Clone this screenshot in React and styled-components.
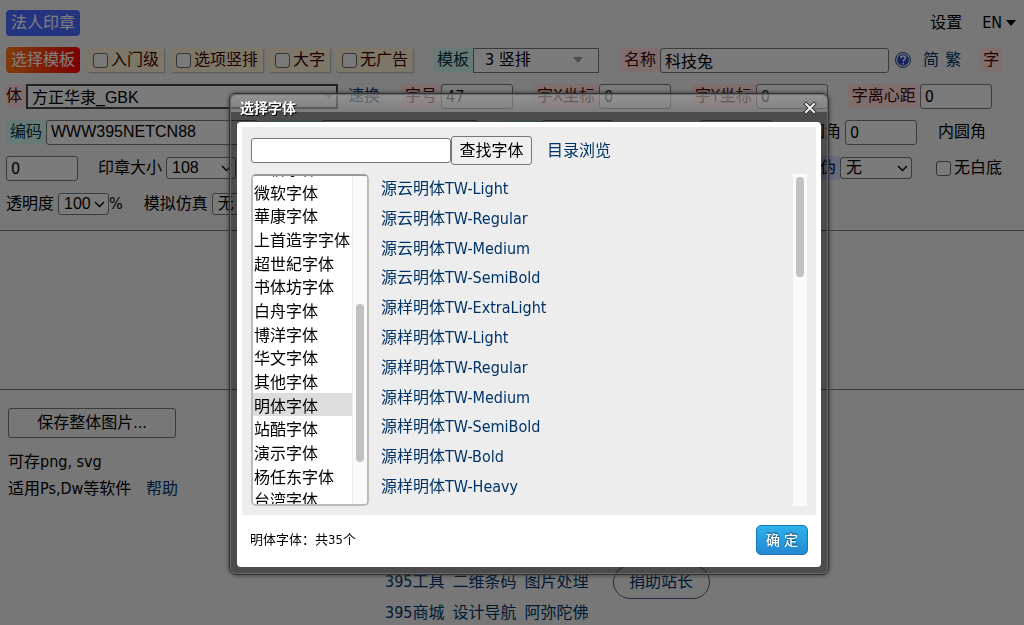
import React, { useLayoutEffect, useRef } from 'react';
import styled, { createGlobalStyle, css } from 'styled-components';

const uiFont = "'DejaVu Sans Condensed', 'Noto Sans CJK SC', sans-serif";
const inputFont = "'Liberation Sans', 'Noto Sans CJK SC', sans-serif";

const GlobalStyle = createGlobalStyle`
  body {
    margin: 0;
    background: #eee;
    color: #000;
    font: 16px/24px ${uiFont};
    overflow: hidden;
  }

  * {
    box-sizing: border-box;
  }

  a {
    color: #036;
    text-decoration: none;
  }
`;

const Page = styled.div`
  min-height: 100vh;
  padding-top: 10px;
`;

const TopBar = styled.header`
  display: flex;
  align-items: center;
  gap: 20px;
  padding: 0 8px 0 6px;
`;

const Tag = styled.button`
  height: 26px;
  padding: 0 5px;
  border: 0;
  border-radius: 4px;
  color: #fff;
  font: 16px/24px ${uiFont};
  white-space: nowrap;
  background: ${({ $hot }) => ($hot ? 'linear-gradient(90deg, #ff7a1a, #f00)' : '#4a68ff')};
`;

const MenuButton = styled.button`
  display: flex;
  align-items: center;
  gap: 4px;
  padding: 0;
  border: 0;
  background: none;
  font: 16px/24px ${uiFont};
`;

const Settings = styled(MenuButton)`
  margin-left: auto;
`;

const Caret = styled.svg`
  width: 10px;
  height: 6px;
`;

const Controls = styled.section`
  display: flex;
  flex-direction: column;
  gap: 10px;
  margin: 11px 22px 0 6px;
  padding-bottom: 13px;
  overflow: hidden;
`;

const Row = styled.div`
  display: flex;
  align-items: center;
  height: 26px;
  white-space: nowrap;

  > * {
    flex-shrink: 0;
  }
`;

const Field = styled.label`
  display: flex;
  align-items: center;
  margin-left: ${({ $gap = 0 }) => $gap}px;
`;

const tones = {
  pink: css`background: #fdd; color: #400;`,
  teal: css`background: #cff4f0; color: #033;`,
  blue: css`background: #ccd4ff; color: #003;`,
  plain: css`background: none;`,
};

const FieldName = styled.span`
  padding: 0 4px 0 ${({ $flush }) => ($flush ? 0 : 4)}px;
  border-radius: 4px 0 0 4px;
  ${({ $tone = 'plain' }) => tones[$tone]}
`;

const TextInput = styled.input`
  width: ${({ $width = 72 }) => $width}px;
  height: 25px;
  padding: 0 4px;
  border: 1px solid #767676;
  border-radius: 3px;
  background: #f6f6f6;
  font: 16px/20px ${({ $arial }) => ($arial ? inputFont : uiFont)};
`;

const FontInput = styled(TextInput)`
  border: 2px solid #444;
  border-radius: 0;
`;

const ComboBox = styled.span`
  display: flex;
  align-items: center;
  position: relative;

  > svg {
    position: absolute;
    right: ${({ $inset = 4 }) => $inset}px;
  }
`;

const Select = styled.select`
  appearance: none;
  width: ${({ $width }) => $width}px;
  height: 22px;
  padding: 0 5px;
  border: 1px solid #767676;
  border-radius: 3px;
  background: #f6f6f6;
  font: 16px/20px ${inputFont};
`;

const TemplateSelect = styled(Select)`
  height: 25px;
  padding: 0 11px;
  border-radius: 0;
  font-family: ${uiFont};
`;

const CheckLabel = styled.label`
  display: flex;
  align-items: center;
  gap: 3px;
  height: 24px;
  margin-right: 5px;
  padding: 0 5px 0 7px;
  border-radius: 4px 0 0 4px;
  background: #f8efd0;
  color: #400;
  box-shadow: 1px 1px 2px #aaa;
`;

const PlainCheck = styled(CheckLabel)`
  margin: 0 0 0 17px;
  background: none;
  color: #000;
  box-shadow: none;
`;

const CheckBox = styled.input`
  appearance: none;
  width: 15px;
  height: 15px;
  margin: 0;
  border: 1px solid #666;
  border-radius: 3px;
  background: #f4f4f4;
`;

const HelpIcon = styled.svg`
  width: 16px;
  height: 16px;
  margin: 0 12px 0 6px;
`;

const TextLink = styled.a`
  margin-left: ${({ $gap = 0 }) => $gap}px;
`;

const Preview = styled.section`
  height: 160px;
  border: solid #777;
  border-width: 1px 0;
`;

const SaveArea = styled.section`
  padding: 18px 8px 0;
`;

const SaveButton = styled.button`
  display: block;
  width: 168px;
  height: 30px;
  margin-bottom: 12px;
  border: 1px solid #767676;
  border-radius: 3px;
  background: #efefef;
  font: 16px/24px ${uiFont};
`;

const SaveNote = styled.p`
  margin: 0 0 3px;
`;

const Footer = styled.footer`
  display: grid;
  grid-template-columns: repeat(3, max-content) 1fr;
  column-gap: 8px;
  row-gap: 2px;
  align-items: center;
  margin-top: 64px;
  padding-left: 385px;
`;

const DonateButton = styled.button`
  width: 97px;
  height: 34px;
  margin-left: 16px;
  border: 1px solid #557;
  border-radius: 17px;
  background: none;
  color: #036;
  font: 16px/24px ${uiFont};
`;

const Overlay = styled.div`
  position: fixed;
  inset: 0;
  display: flex;
  align-items: flex-start;
  justify-content: center;
  padding: 93px 0 0 34px;
  background: rgba(0, 0, 0, 0.5);
`;

const Dialog = styled.div`
  width: 600px;
  padding: 0 7px 7px;
  border: 1px solid #333;
  border-radius: 7px;
  background:
    linear-gradient(rgba(255, 255, 255, 0.4), rgba(255, 255, 255, 0.28)) top / 100% 18px no-repeat,
    rgba(0, 0, 0, 0.36);
  box-shadow: inset 0 0 1px 1px #6a6a6a, 0 0 4px #333;
`;

const DialogHeader = styled.header`
  display: flex;
  align-items: center;
  justify-content: space-between;
  height: 28px;
  padding: 0 4px 0 3px;
`;

const DialogTitle = styled.h2`
  margin: 0;
  color: #fff;
  font: bold 14px/20px ${uiFont};
  text-shadow: 1px 1px 1px #000;
`;

const CloseButton = styled.button`
  display: flex;
  padding: 0;
  border: 0;
  background: none;
`;

const DialogPanel = styled.div`
  padding: 5px 5px 0;
  border-radius: 4px;
  background: #fff;
`;

const DialogBody = styled.div`
  height: 388px;
  padding: 9px 9px 0;
  background: #ededed;
`;

const SearchRow = styled.form`
  display: flex;
  align-items: center;
  height: 29px;
  margin-bottom: 9px;
`;

const SearchInput = styled(TextInput)`
  background: #fff;
`;

const SearchButton = styled.button`
  width: 81px;
  height: 29px;
  padding: 0;
  border: 1px solid #767676;
  border-radius: 3px;
  background: #efefef;
  font: 16px/24px ${uiFont};
`;

const Lists = styled.div`
  display: flex;
  height: 332px;
`;

const CategoryBox = styled.div`
  display: flex;
  width: 118px;
  margin-right: 12px;
  border: 2px solid #bbb;
  border-top-color: #999;
  border-radius: 5px;
  background: #fff;
  overflow: hidden;
`;

const CategoryList = styled.select`
  flex: 1;
  min-width: 0;
  height: 328px;
  padding: 0;
  border: 0;
  outline: 0;
  background: #fff;
  font: 16px/20px ${uiFont};
  overflow: hidden;

  option {
    height: 24px;
    min-height: 0;
    padding: 0 1px;
    line-height: 20px;
    color: #000;
  }

  option:nth-child(3n) {
    height: 23px;
  }

  option:checked {
    background: #ddd linear-gradient(#ddd, #ddd);
  }
`;

const Track = styled.div`
  width: 15px;
  padding: 3px;
  border-left: 1px solid #eee;
  background: #fafafa;
`;

const Thumb = styled.div`
  border-radius: 5px;
  background: #c1c1c1;
`;

const FontList = styled.ul`
  flex: 1;
  display: flex;
  flex-direction: column;
  justify-content: space-between;
  margin: 0;
  padding: 3px 0 7px;
  list-style: none;
`;

const DialogFooter = styled.footer`
  display: flex;
  align-items: center;
  justify-content: space-between;
  height: 52px;
  padding: 0 8px 3px;
  font-size: 13px;
`;

const ConfirmButton = styled.button`
  width: 52px;
  height: 30px;
  padding: 0;
  border: 1px solid #1a76b8;
  border-radius: 5px;
  background: linear-gradient(#2eb2ec, #2287d2);
  color: #fff;
  font: 500 14px/20px ${uiFont};
  text-shadow: 0 -1px 1px #135;
`;

const categories = [
  '蒙纳字体', '金桥字体', '微软字体', '華康字体', '上首造字字体', '超世紀字体', '书体坊字体', '白舟字体',
  '博洋字体', '华文字体', '其他字体', '明体字体', '站酷字体', '演示字体', '杨任东字体', '台湾字体', '日文字体',
];

const fonts = [
  '源云明体TW-Light', '源云明体TW-Regular', '源云明体TW-Medium', '源云明体TW-SemiBold',
  '源样明体TW-ExtraLight', '源样明体TW-Light', '源样明体TW-Regular', '源样明体TW-Medium',
  '源样明体TW-SemiBold', '源样明体TW-Bold', '源样明体TW-Heavy',
];

function Chevron() {
  return (
    <svg width="11" height="7" viewBox="0 0 11 7" fill="none" stroke="#000" strokeWidth="1.4">
      <path d="M1 1l4.500 4.500L10 1" />
    </svg>
  );
}

function Triangle({ color = '#999' }) {
  return <Caret viewBox="0 0 10 6" fill={color}><path d="M0 0h10L5 6z" /></Caret>;
}

function Check({ children }) {
  return <CheckLabel><CheckBox type="checkbox" />{children}</CheckLabel>;
}

function Input({ name, tone, gap, ...rest }) {
  return (
    <Field $gap={gap}>
      <FieldName $tone={tone}>{name}</FieldName>
      <TextInput {...rest} />
    </Field>
  );
}

function DropDown({ name, tone, gap, width, value, flush }) {
  return (
    <Field $gap={gap}>
      <FieldName $tone={tone} $flush={flush}>{name}</FieldName>
      <ComboBox>
        <Select $width={width}><option>{value}</option></Select>
        <Chevron />
      </ComboBox>
    </Field>
  );
}

function FontDialog() {
  const list = useRef(null);

  useLayoutEffect(() => {
    list.current.scrollTop = 44;
  }, []);

  return (
    <Dialog role="dialog" aria-labelledby="dialog-title">
      <DialogHeader>
        <DialogTitle id="dialog-title">选择字体</DialogTitle>
        <CloseButton aria-label="关闭">
          <svg width="14" height="14" viewBox="0 0 14 14" strokeLinecap="square">
            <path d="M3 3l8 8M11 3l-8 8" stroke="#333" strokeWidth="4" />
            <path d="M3 3l8 8M11 3l-8 8" stroke="#eee" strokeWidth="2" />
          </svg>
        </CloseButton>
      </DialogHeader>
      <DialogPanel>
        <DialogBody>
          <SearchRow>
            <SearchInput aria-label="查找字体" $width={200} />
            <SearchButton type="button">查找字体</SearchButton>
            <TextLink href="#" $gap={15}>目录浏览</TextLink>
          </SearchRow>
          <Lists>
            <CategoryBox>
              <CategoryList ref={list} size={14} defaultValue="明体字体" aria-label="字体分类">
                {categories.map((name) => <option key={name}>{name}</option>)}
              </CategoryList>
              <Track><Thumb style={{ height: 158, marginTop: 125 }} /></Track>
            </CategoryBox>
            <FontList>
              {fonts.map((name) => <li key={name}><a href="#">{name}</a></li>)}
            </FontList>
            <Track><Thumb style={{ height: 100 }} /></Track>
          </Lists>
        </DialogBody>
        <DialogFooter>
          <span>明体字体：共35个</span>
          <ConfirmButton>确 定</ConfirmButton>
        </DialogFooter>
      </DialogPanel>
    </Dialog>
  );
}

function App() {
  return (
    <>
      <GlobalStyle />
      <Page>
        <TopBar>
          <Tag>法人印章</Tag>
          <Settings>设置</Settings>
          <MenuButton>EN <Triangle color="#000" /></MenuButton>
        </TopBar>
        <Controls>
          <Row>
            <Tag $hot>选择模板</Tag>
            <Field $gap={6} as="div">
              <Check>入门级</Check>
              <Check>选项竖排</Check>
              <Check>大字</Check>
              <Check>无广告</Check>
            </Field>
            <Field $gap={15}>
              <FieldName $tone="teal">模板</FieldName>
              <ComboBox $inset={16}>
                <TemplateSelect $width={126}><option>3 竖排</option></TemplateSelect>
                <Triangle />
              </ComboBox>
            </Field>
            <Input name="名称" tone="pink" gap={21} $width={229} $arial defaultValue="科技兔" />
            <HelpIcon viewBox="0 0 16 16">
              <circle cx="8" cy="8" r="7.500" fill="#cde" stroke="#347" />
              <circle cx="8" cy="8" r="5.800" fill="#24b" />
              <path d="M5.800 6.300c0-3 4.600-3 4.600-.3 0 1.600-2.300 1.700-2.300 3.400M8.100 11v1.400" fill="none" stroke="#fff" strokeWidth="1.600" />
            </HelpIcon>
            <TextLink href="#">简</TextLink>
            <TextLink href="#" $gap={6}>繁</TextLink>
            <Field $gap={18}><FieldName $tone="pink">字</FieldName></Field>
          </Row>
          <Row>
            <Field>
              <FieldName $tone="pink" $flush>体</FieldName>
              <ComboBox>
                <FontInput $width={312} $arial defaultValue="方正华隶_GBK" />
                <Triangle />
              </ComboBox>
            </Field>
            <TextLink href="#" $gap={10}>速换</TextLink>
            <Input name="字号" tone="pink" gap={21} defaultValue="47" />
            <Input name="字X坐标" tone="pink" gap={20} defaultValue="0" />
            <Input name="字Y坐标" tone="pink" gap={20} defaultValue="0" />
            <Input name="字离心距" tone="pink" gap={20} defaultValue="0" />
          </Row>
          <Row>
            <Input name="编码" tone="teal" $width={212} $arial defaultValue="WWW395NETCN88" />
            <Input name="防伪码" tone="teal" gap={7} $width={157} $arial />
            <Input name="字号" tone="teal" gap={23} />
            <Input name="字间距" gap={31} />
            <Input name="外圆角" gap={17} defaultValue="0" />
            <Field $gap={17}><FieldName>内圆角</FieldName></Field>
          </Row>
          <Row>
            <TextInput aria-label="内圆角" defaultValue="0" />
            <DropDown name="印章大小" gap={16} width={70} value="108" />
            <DropDown name="防伪" tone="blue" gap={564} width={72} value="无" />
            <PlainCheck><CheckBox type="checkbox" />无白底</PlainCheck>
          </Row>
          <Row>
            <DropDown name="透明度" flush width={51} value="100" />
            %
            <DropDown name="模拟仿真" gap={17} width={72} value="无" />
          </Row>
        </Controls>
        <Preview />
        <SaveArea>
          <SaveButton>保存整体图片...</SaveButton>
          <SaveNote>可存png, svg</SaveNote>
          <SaveNote>适用Ps,Dw等软件 <TextLink href="#" $gap={10}>帮助</TextLink></SaveNote>
        </SaveArea>
        <Footer>
          <a href="#">395工具</a>
          <a href="#">二维条码</a>
          <a href="#">图片处理</a>
          <DonateButton>捐助站长</DonateButton>
          <a href="#">395商城</a>
          <a href="#">设计导航</a>
          <a href="#">阿弥陀佛</a>
        </Footer>
      </Page>
      <Overlay><FontDialog /></Overlay>
    </>
  );
}

export default App;
